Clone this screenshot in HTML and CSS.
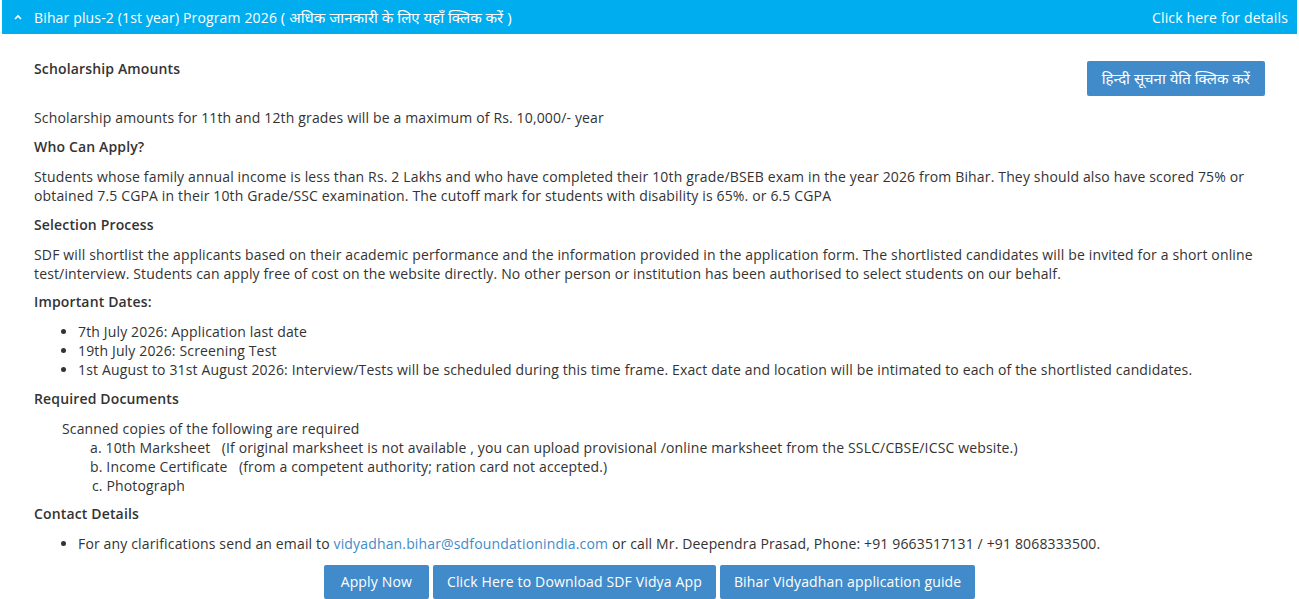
FILE: index.html
```html
<!DOCTYPE html>
<html lang="en">
<head>
    <meta charset="UTF-8">
    <meta name="viewport" content="width=device-width, initial-scale=1.0">
    <title>Bihar plus-2 Program 2026</title>
    <link rel="stylesheet" href="styles.css">
</head>
<body>
    <div id="program-panel">
        <div class="panel-heading">
            <div class="panel-title">
                <svg class="caret" width="8" height="6" viewBox="0 0 8 6"><path d="M1 5 L4 2 L7 5" fill="none" stroke="#fff" stroke-width="1.6"/></svg>
                <span>Bihar plus-2 (1st year) Program 2026 <span class="hi">( अधिक जानकारी के लिए यहाँ क्लिक करें )</span></span>
            </div>
            <div class="panel-link">Click here for details</div>
        </div>

        <div class="panel-body">
            <div class="top-row">
                <h4>Scholarship Amounts</h4>
                <a class="btn btn-hindi" href="#">हिन्दी सूचना येति क्लिक करें</a>
            </div>
            <p>Scholarship amounts for 11th and 12th grades will be a maximum of Rs. 10,000/- year</p>

            <h4>Who Can Apply?</h4>
            <p>Students whose family annual income is less than Rs. 2 Lakhs and who have completed their 10th grade/BSEB exam in the year 2026 from Bihar. They should also have scored 75% or obtained 7.5 CGPA in their 10th Grade/SSC examination. The cutoff mark for students with disability is 65%. or 6.5 CGPA</p>

            <h4>Selection Process</h4>
            <p class="tight">SDF will shortlist the applicants based on their academic performance and the information provided in the application form. The shortlisted candidates will be invited for a short online test/interview. Students can apply free of cost on the website directly. No other person or institution has been authorised to select students on our behalf.</p>

            <h4>Important Dates:</h4>
            <ul class="dates">
                <li>7th July 2026: Application last date</li>
                <li>19th July 2026: Screening Test</li>
                <li>1st August to 31st August 2026: Interview/Tests will be scheduled during this time frame. Exact date and location will be intimated to each of the shortlisted candidates.</li>
            </ul>

            <h4>Required Documents</h4>
            <div class="docs">
                <div>Scanned copies of the following are required</div>
                <div class="doc-item">a. 10th Marksheet &nbsp; (If original marksheet is not available , you can upload provisional /online marksheet from the SSLC/CBSE/ICSC website.)</div>
                <div class="doc-item">b. Income Certificate &nbsp; (from a competent authority; ration card not accepted.)</div>
                <div class="doc-item doc-last">c. Photograph</div>
            </div>

            <h4>Contact Details</h4>
            <ul class="contact">
                <li>For any clarifications send an email to <a href="#">vidyadhan.bihar@sdfoundationindia.com</a> or call Mr. Deependra Prasad, Phone: +91 9663517131 / +91 8068333500.</li>
            </ul>

            <div class="actions">
                <a class="btn btn-apply" href="#">Apply Now</a>
                <a class="btn" href="#">Click Here to Download SDF Vidya App</a>
                <a class="btn" href="#">Bihar Vidyadhan application guide</a>
            </div>
        </div>
    </div>
</body>
</html>
```

FILE: styles.css
```css
body {
    margin: 0;
    padding: 0;
    font-family: 'Open Sans', 'Noto Sans', sans-serif;
    font-size: 14px;
    line-height: 19px;
    letter-spacing: 0.15px;
    color: #333;
    background-color: #fff;
}

#program-panel {
    margin: 0 2px;
}

.panel-heading {
    background-color: #00aeef;
    color: #fff;
    height: 34px;
    display: flex;
    align-items: center;
    justify-content: space-between;
    padding: 0 9px 0 12px;
}

.panel-title {
    display: flex;
    align-items: center;
    gap: 12px;
}

.panel-title .hi {
    font-size: 15px;
    letter-spacing: 0;
}

.caret {
    display: block;
}

.panel-body {
    padding: 25px 32px 0 32px;
}

.top-row {
    display: flex;
    justify-content: space-between;
    align-items: flex-start;
    margin-bottom: 12px;
}

h4 {
    margin: 0 0 11px 0;
    font-size: 14px;
    font-weight: 600;
}

.top-row h4 {
    margin: 0;
}

p {
    margin: 0 0 10px 0;
}

p.tight {
    margin-bottom: 9px;
}

.btn {
    display: inline-block;
    background-color: #428bca;
    color: #fff;
    text-decoration: none;
    border-radius: 2px;
    padding: 7px 14px;
    font-size: 14px;
    line-height: 20px;
}

.btn-hindi {
    margin-top: 2px;
    padding: 7px 15px 8px;
    font-size: 15px;
    letter-spacing: 0;
}

.btn-apply {
    padding: 7px 17px;
}

ul {
    margin: 0 0 10px 0;
    padding-left: 44px;
}

.docs {
    padding-left: 28px;
    margin-bottom: 9px;
}

.doc-item {
    padding-left: 28px;
}

.doc-last {
    padding-left: 30px;
}

.contact {
    margin-bottom: 12px;
}

.contact a {
    color: #428bca;
    text-decoration: none;
}

.actions {
    display: flex;
    justify-content: center;
    gap: 4px;
}
```
